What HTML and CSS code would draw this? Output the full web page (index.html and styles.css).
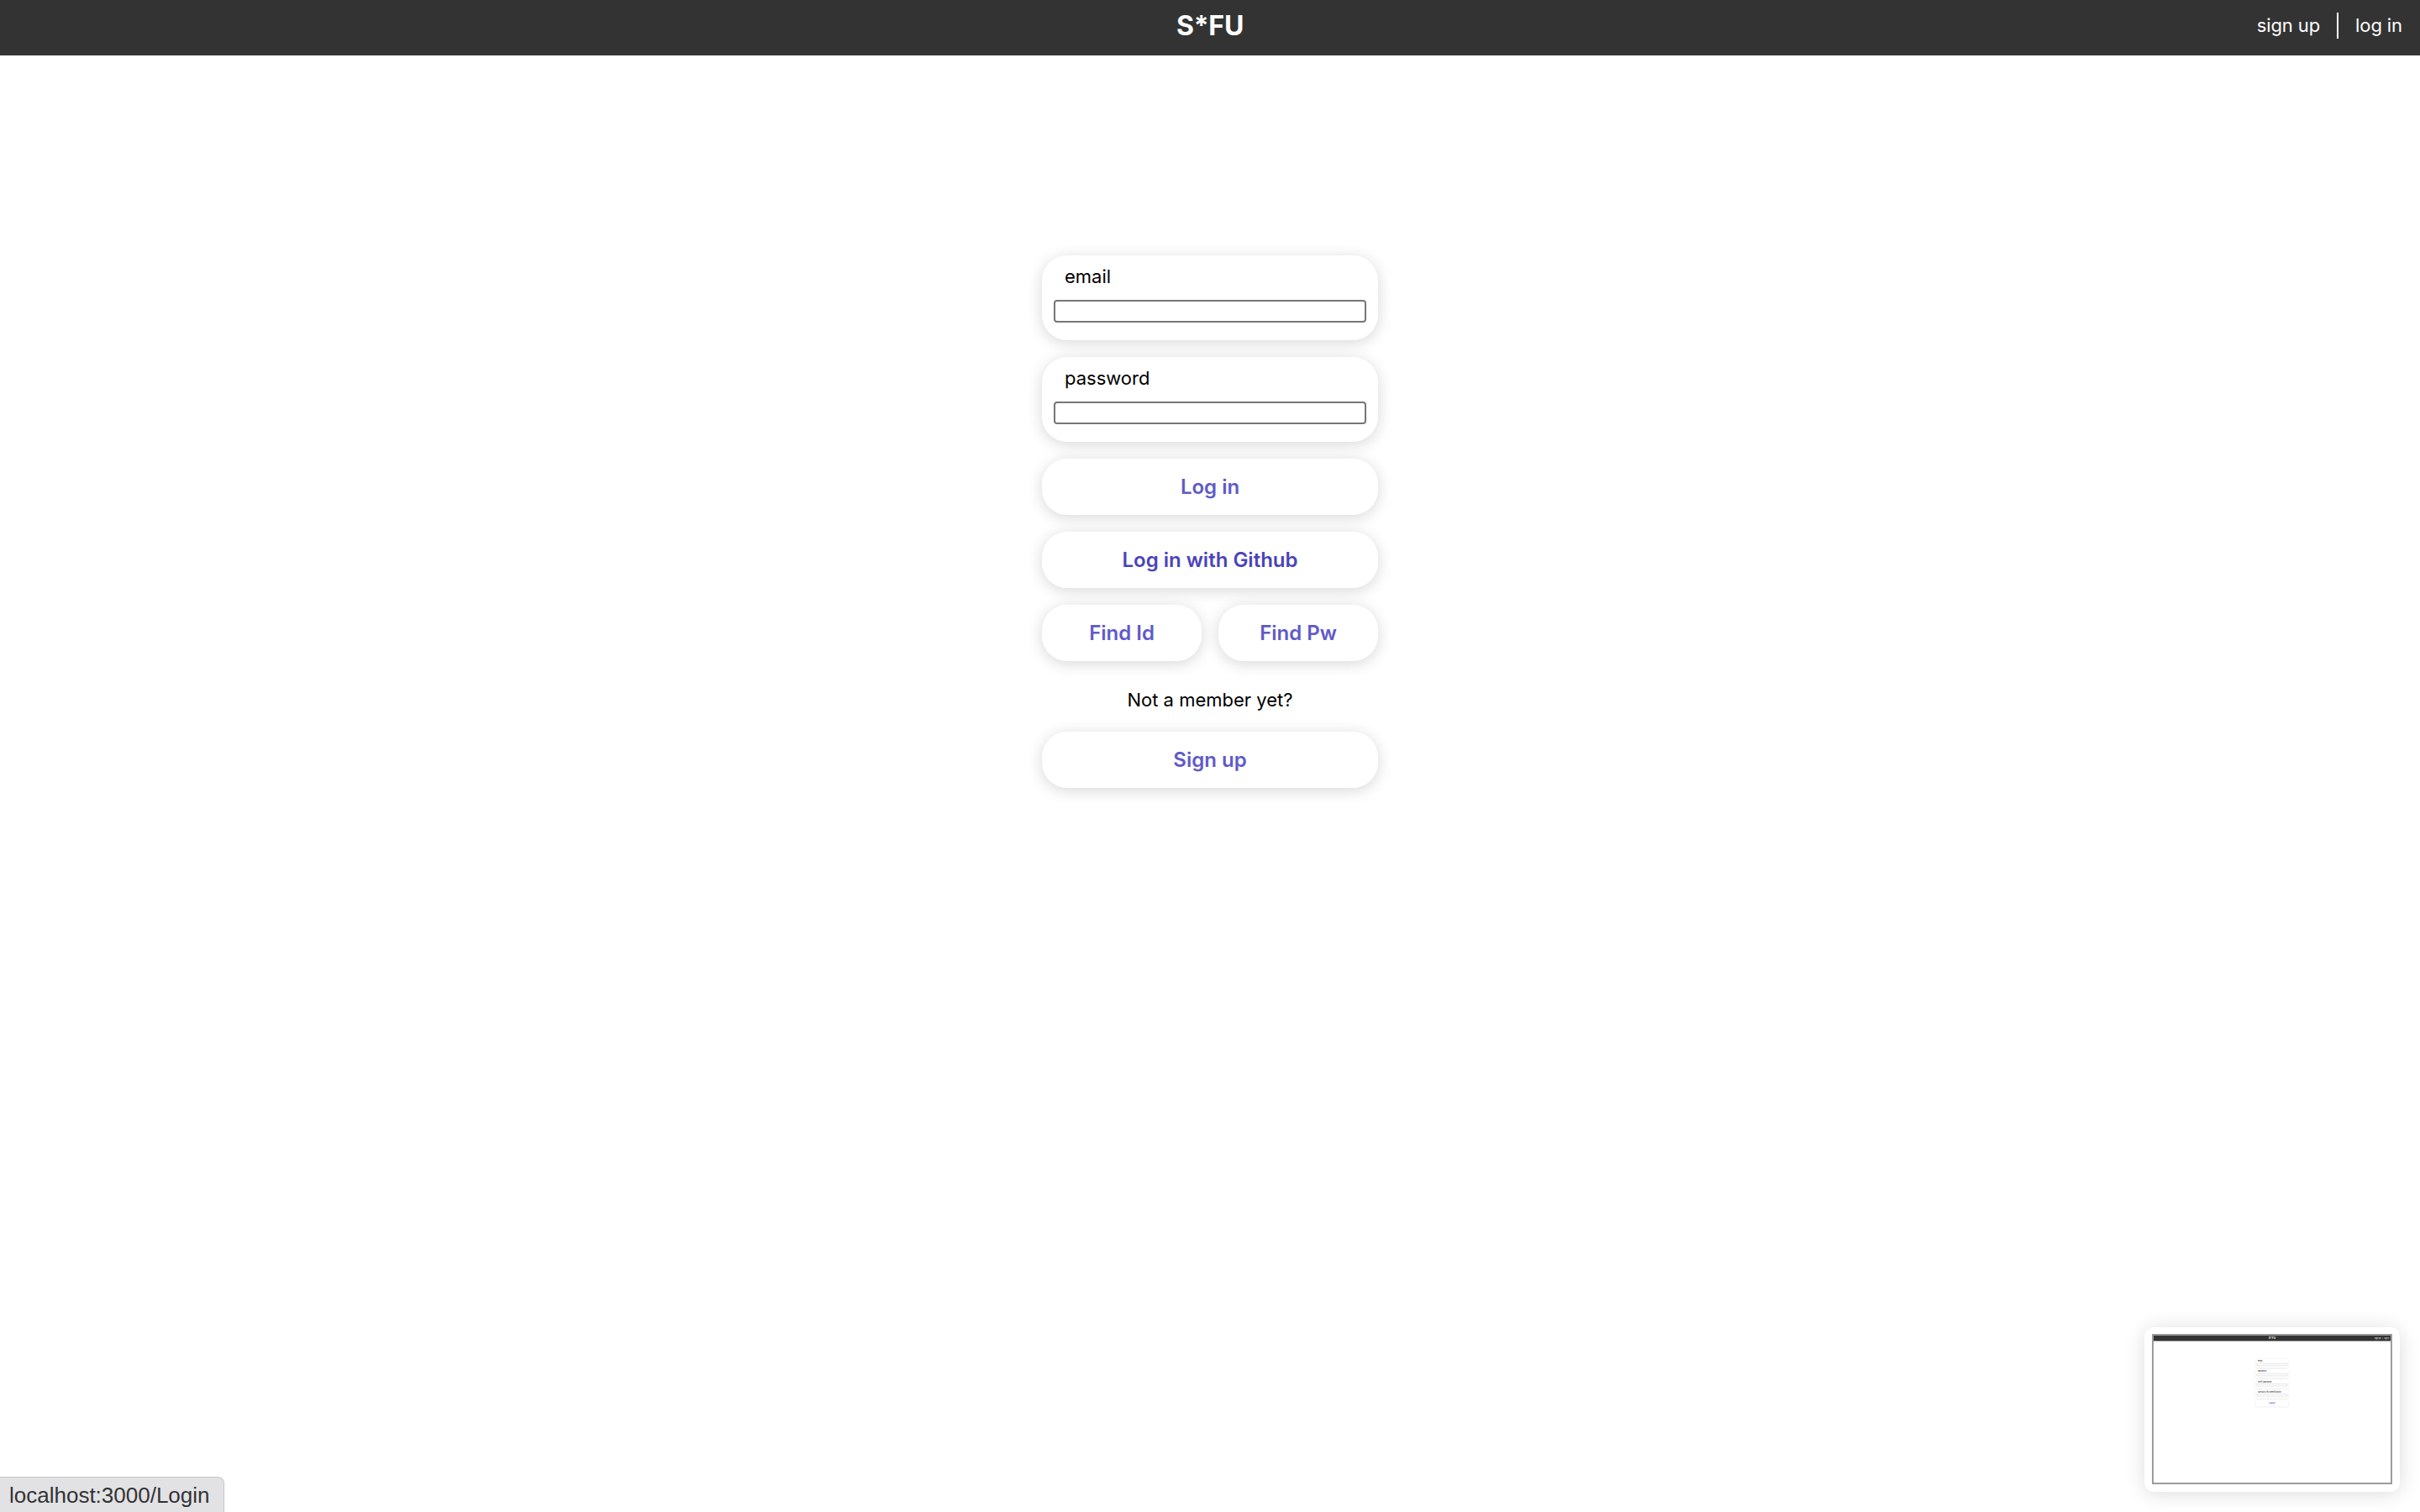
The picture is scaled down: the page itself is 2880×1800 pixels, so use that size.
FILE: index.html
```html
<!DOCTYPE html>
<html lang="en">
<head>
<meta charset="utf-8">
<title>S*FU - Log in</title>
<link rel="stylesheet" href="styles.css">
</head>
<body>
<header class="topbar">
  <div class="topbar-side"></div>
  <div class="brand">S*FU</div>
  <nav class="topnav">
    <a class="topnav-link" href="#">sign up</a>
    <span class="topnav-sep"></span>
    <a class="topnav-link" href="#">log in</a>
  </nav>
</header>

<main class="page">
  <form class="auth">
    <div class="field-card">
      <label class="field-label">email</label>
      <input class="field-input" type="text">
    </div>
    <div class="field-card">
      <label class="field-label">password</label>
      <input class="field-input" type="password">
    </div>
    <button type="button" class="pill-btn">Log in</button>
    <button type="button" class="pill-btn pill-btn-dark">Log in with Github</button>
    <div class="btn-row">
      <button type="button" class="pill-btn">Find Id</button>
      <button type="button" class="pill-btn">Find Pw</button>
    </div>
    <p class="hint">Not a member yet?</p>
    <button type="button" class="pill-btn">Sign up</button>
  </form>
</main>

<div class="status-url">localhost:3000/Login</div>

<div class="preview">
  <div class="preview-screen">
    <div class="mini">
      <header class="topbar">
        <div class="topbar-side"></div>
        <div class="brand">S*FU</div>
        <nav class="topnav">
          <span class="topnav-link">sign up</span>
          <span class="topnav-sep"></span>
          <span class="topnav-link">log in</span>
        </nav>
      </header>
      <div class="page">
        <div class="auth">
          <div class="field-card"><span class="field-label">email</span><span class="field-input mini-input"></span></div>
          <div class="field-card"><span class="field-label">password</span><span class="field-input mini-input"></span></div>
          <div class="field-card"><span class="field-label">verify password</span><span class="field-input mini-input"></span></div>
          <div class="field-card"><span class="field-label">Github Id (for identification)</span><span class="field-input mini-input"></span></div>
          <div class="pill-btn mini-submit">Submit</div>
        </div>
      </div>
    </div>
  </div>
</div>
</body>
</html>
```

FILE: styles.css
```css
* { box-sizing: border-box; }

html, body {
  margin: 0;
  padding: 0;
  background: #ffffff;
}

body {
  width: 2880px;
  height: 1800px;
  overflow: hidden;
  font-family: Inter, "Noto Sans", sans-serif;
  color: #000;
}

.topbar {
  height: 66px;
  background: #333333;
  display: grid;
  grid-template-columns: 1fr auto 1fr;
  align-items: start;
  padding: 2px 21px 0;
}

.brand {
  color: #ffffff;
  font-size: 32px;
  font-weight: 700;
  line-height: 57px;
  letter-spacing: -0.2px;
}

.topnav {
  justify-self: end;
  display: flex;
  align-items: center;
  height: 57px;
}

.topnav-link {
  color: #ffffff;
  text-decoration: none;
  font-size: 22px;
  line-height: 57px;
  letter-spacing: -0.1px;
}

.topnav-sep {
  width: 2px;
  height: 31px;
  background: #ffffff;
  margin: 0 20px;
}

.page {
  display: flex;
  justify-content: center;
  padding-top: 238px;
}

.auth {
  width: 400px;
  display: flex;
  flex-direction: column;
  gap: 20px;
  margin: 0;
}

.field-card {
  background: #fff;
  border-radius: 30px;
  box-shadow: 0 3px 18px rgba(0, 0, 0, 0.16);
  padding: 11px 14px 21px;
  display: flex;
  flex-direction: column;
}

.field-label {
  font-size: 22px;
  line-height: 28px;
  padding-left: 13px;
  color: #000;
}

.field-input {
  display: block;
  margin-top: 14px;
  width: 100%;
  height: 27px;
  border: 2px solid #767676;
  border-radius: 4px;
  background: #fff;
  padding: 0 4px;
  font: inherit;
}

.pill-btn {
  height: 67px;
  width: 100%;
  border: none;
  border-radius: 30px;
  background: #fff;
  box-shadow: 0 3px 18px rgba(0, 0, 0, 0.16);
  font-family: Inter, "Noto Sans", sans-serif;
  font-size: 24px;
  font-weight: 600;
  color: #605ac9;
  display: flex;
  align-items: center;
  justify-content: center;
  padding: 0;
  cursor: pointer;
}

.pill-btn-dark {
  color: #4a44b9;
}

.btn-row {
  display: grid;
  grid-template-columns: 1fr 1fr;
  gap: 20px;
}

.hint {
  margin: 12px 0 4px;
  text-align: center;
  font-size: 22px;
  line-height: 28px;
  color: #000;
}

.status-url {
  position: fixed;
  left: 0;
  bottom: 0;
  height: 42px;
  padding: 3px 16px 3px 11px;
  background: #e2e2e5;
  border: 1px solid #c6c6c8;
  border-left: none;
  border-bottom: none;
  border-top-right-radius: 8px;
  font-family: "Liberation Sans", Arial, sans-serif;
  font-size: 26px;
  line-height: 36px;
  color: #333;
}

.preview {
  position: fixed;
  left: 2552px;
  top: 1580px;
  width: 304px;
  height: 196px;
  background: #fff;
  border-radius: 12px;
  box-shadow: 0 2px 24px rgba(0, 0, 0, 0.14);
  padding: 8px 9px 9px;
}

.preview-screen {
  width: 286px;
  height: 179px;
  border: 2px solid #9c9c9c;
  overflow: hidden;
  position: relative;
}

.mini {
  width: 2880px;
  height: 1800px;
  background: #fff;
  transform: scale(0.0979);
  transform-origin: 0 0;
}

.mini .page {
  padding-top: 220px;
}

.mini .field-card {
  padding-bottom: 24px;
}

.mini-submit {
  height: 80px;
  font-size: 22px;
  font-weight: 500;
  text-decoration: underline;
}
```
